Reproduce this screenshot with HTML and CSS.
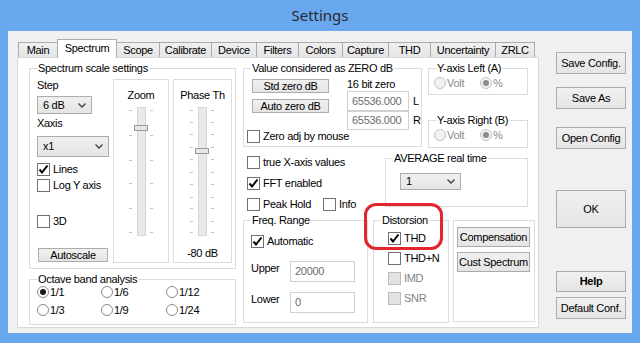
FILE: index.html
```html
<!DOCTYPE html>
<html lang="en">
<head>
    <meta charset="UTF-8">
    <title>Settings</title>
    <link rel="stylesheet" href="styles.css">
</head>
<body>
    <div class="window">
        <div class="titlebar">Settings</div>
        <div class="client">
            <div class="tabs-area">
                <div class="tabstrip">
                    <div class="tab" style="width:39px">Main</div>
                    <div class="tab active" style="width:60px">Spectrum</div>
                    <div class="tab" style="width:42px">Scope</div>
                    <div class="tab" style="width:52px">Calibrate</div>
                    <div class="tab" style="width:45px">Device</div>
                    <div class="tab" style="width:42px">Filters</div>
                    <div class="tab" style="width:44px">Colors</div>
                    <div class="tab" style="width:46px">Capture</div>
                    <div class="tab" style="width:42px">THD</div>
                    <div class="tab" style="width:65px">Uncertainty</div>
                    <div class="tab last" style="width:40px">ZRLC</div>
                </div>

                <div class="panel">
                    <div class="col-a">
                        <div class="group scale-group">
                            <div class="group-title">Spectrum scale settings</div>
                            <div class="scale-left">
                                <div class="label">Step</div>
                                <div class="combo step-combo">
                                    <span>6 dB</span>
                                    <svg width="8" height="5" viewBox="0 0 8 5"><path d="M0.5 0.5 L4 4 L7.5 0.5" fill="none" stroke="#444" stroke-width="1.4"/></svg>
                                </div>
                                <div class="label xaxis-label">Xaxis</div>
                                <div class="combo xaxis-combo">
                                    <span>x1</span>
                                    <svg width="8" height="5" viewBox="0 0 8 5"><path d="M0.5 0.5 L4 4 L7.5 0.5" fill="none" stroke="#444" stroke-width="1.4"/></svg>
                                </div>
                                <div class="check-row lines-row">
                                    <span class="checkbox"><svg width="11" height="11" viewBox="0 0 11 11"><path d="M1.5 5.5 L4 8.5 L9.5 1.5" fill="none" stroke="#000" stroke-width="2"/></svg></span>Lines
                                </div>
                                <div class="check-row logy-row"><span class="checkbox"></span>Log Y axis</div>
                                <div class="check-row d3-row"><span class="checkbox"></span>3D</div>
                                <div class="button autoscale">Autoscale</div>
                            </div>
                            <div class="slider-box zoom-box">
                                <div class="label">Zoom</div>
                                <svg class="slider" width="25" height="130" viewBox="0 0 25 130">
                                    <path d="M0 3.5h3M21 3.5h3M0 28.5h3M21 28.5h3M0 53.5h3M21 53.5h3M0 76.5h3M21 76.5h3M0 101.5h3M21 101.5h3M0 125.5h3M21 125.5h3" stroke="#c4c4c4"/>
                                    <rect x="8.5" y="0.5" width="8" height="128" fill="#e7eaea" stroke="#d6d6d6"/>
                                    <rect x="5.5" y="18.5" width="13" height="5" fill="#e6e6e6" stroke="#999"/>
                                </svg>
                            </div>
                            <div class="slider-box phase-box">
                                <div class="label">Phase Th</div>
                                <svg class="slider" width="25" height="130" viewBox="0 0 25 130">
                                    <path d="M0 3.5h3M21 3.5h3M0 15.5h3M21 15.5h3M0 27.5h3M21 27.5h3M0 40.5h3M21 40.5h3M0 52.5h3M21 52.5h3M0 65.5h3M21 65.5h3M0 77.5h3M21 77.5h3M0 90.5h3M21 90.5h3M0 101.5h3M21 101.5h3M0 114.5h3M21 114.5h3M0 125.5h3M21 125.5h3" stroke="#c4c4c4"/>
                                    <rect x="8.5" y="0.5" width="8" height="128" fill="#e7eaea" stroke="#d6d6d6"/>
                                    <rect x="5.5" y="41.5" width="13" height="5" fill="#e6e6e6" stroke="#999"/>
                                </svg>
                                <div class="label db-label">-80 dB</div>
                            </div>
                        </div>

                        <div class="group octave-group">
                            <div class="group-title">Octave band analysis</div>
                            <div class="octave-grid">
                                <div class="radio-row"><span class="radio on"></span>1/1</div>
                                <div class="radio-row"><span class="radio"></span>1/6</div>
                                <div class="radio-row"><span class="radio"></span>1/12</div>
                                <div class="radio-row"><span class="radio"></span>1/3</div>
                                <div class="radio-row"><span class="radio"></span>1/9</div>
                                <div class="radio-row"><span class="radio"></span>1/24</div>
                            </div>
                        </div>
                    </div>

                    <div class="col-b">
                        <div class="top-row">
                            <div class="group zero-group">
                                <div class="group-title">Value considered as ZERO dB</div>
                                <div class="zero-upper">
                                    <div class="zero-buttons">
                                        <div class="button small">Std zero dB</div>
                                        <div class="button small">Auto zero dB</div>
                                    </div>
                                    <div class="zero-values">
                                        <div class="label">16 bit zero</div>
                                        <div class="value-row"><div class="textbox">65536.000</div><span>L</span></div>
                                        <div class="value-row second"><div class="textbox">65536.000</div><span>R</span></div>
                                    </div>
                                </div>
                                <div class="check-row zero-adj"><span class="checkbox"></span>Zero adj by mouse</div>
                            </div>
                            <div class="y-stack">
                                <div class="group y-group">
                                    <div class="group-title">Y-axis Left (A)</div>
                                    <div class="y-radios">
                                        <div class="radio-row disabled volt"><span class="radio"></span>Volt</div>
                                        <div class="radio-row disabled"><span class="radio on"></span>%</div>
                                    </div>
                                </div>
                                <div class="group y-group right-axis">
                                    <div class="group-title">Y-axis Right (B)</div>
                                    <div class="y-radios">
                                        <div class="radio-row disabled volt"><span class="radio"></span>Volt</div>
                                        <div class="radio-row disabled"><span class="radio on"></span>%</div>
                                    </div>
                                </div>
                            </div>
                        </div>

                        <div class="mid-row">
                            <div class="checklist">
                                <div class="check-row"><span class="checkbox"></span>true X-axis values</div>
                                <div class="check-row">
                                    <span class="checkbox"><svg width="11" height="11" viewBox="0 0 11 11"><path d="M1.5 5.5 L4 8.5 L9.5 1.5" fill="none" stroke="#000" stroke-width="2"/></svg></span>FFT enabled
                                </div>
                                <div class="peak-row">
                                    <div class="check-row peak"><span class="checkbox"></span>Peak Hold</div>
                                    <div class="check-row"><span class="checkbox"></span>Info</div>
                                </div>
                            </div>
                            <div class="group avg-group">
                                <div class="group-title">AVERAGE real time</div>
                                <div class="combo avg-combo">
                                    <span>1</span>
                                    <svg width="8" height="5" viewBox="0 0 8 5"><path d="M0.5 0.5 L4 4 L7.5 0.5" fill="none" stroke="#444" stroke-width="1.4"/></svg>
                                </div>
                            </div>
                        </div>

                        <div class="bottom-row">
                            <div class="group freq-group">
                                <div class="group-title">Freq. Range</div>
                                <div class="check-row auto-row">
                                    <span class="checkbox"><svg width="11" height="11" viewBox="0 0 11 11"><path d="M1.5 5.5 L4 8.5 L9.5 1.5" fill="none" stroke="#000" stroke-width="2"/></svg></span>Automatic
                                </div>
                                <div class="field-row upper-row"><span class="label">Upper</span><div class="textbox wide">20000</div></div>
                                <div class="field-row lower-row"><span class="label">Lower</span><div class="textbox wide">0</div></div>
                            </div>
                            <div class="group dist-group">
                                <div class="group-title">Distorsion</div>
                                <div class="dist-list">
                                    <div class="check-row">
                                        <span class="checkbox"><svg width="11" height="11" viewBox="0 0 11 11"><path d="M1.5 5.5 L4 8.5 L9.5 1.5" fill="none" stroke="#000" stroke-width="2"/></svg></span>THD
                                    </div>
                                    <div class="check-row"><span class="checkbox"></span>THD+N</div>
                                    <div class="check-row disabled"><span class="checkbox"></span>IMD</div>
                                    <div class="check-row disabled"><span class="checkbox"></span>SNR</div>
                                </div>
                            </div>
                            <div class="group comp-group">
                                <div class="button comp-btn">Compensation</div>
                                <div class="button comp-btn second">Cust Spectrum</div>
                            </div>
                        </div>
                    </div>

                    <div class="annotation"></div>
                </div>
            </div>

            <div class="side-buttons">
                <div class="button side save-config">Save Config.</div>
                <div class="button side save-as">Save As</div>
                <div class="button side open-config">Open Config</div>
                <div class="button side ok">OK</div>
                <div class="button side help">Help</div>
                <div class="button side default-conf">Default Conf.</div>
            </div>
        </div>
    </div>
</body>
</html>
```

FILE: styles.css
```css
* {
    box-sizing: border-box;
    margin: 0;
    padding: 0;
}

body {
    width: 640px;
    height: 343px;
    overflow: hidden;
    background: #69a8ef;
    font-family: "Liberation Sans", Arial, sans-serif;
    font-size: 11px;
    letter-spacing: -0.3px;
    line-height: 13px;
    color: #000;
}

.window {
    width: 640px;
    height: 343px;
    background: #69a8ef;
}

.titlebar {
    height: 31px;
    line-height: 31px;
    text-align: center;
    font-family: "Noto Sans", "Open Sans", sans-serif;
    font-size: 15px;
    letter-spacing: 0;
    color: #2a2a2a;
}

.client {
    display: flex;
    margin: 0 8px;
    height: 302px;
    padding: 8px 0 0 9px;
    background: #f0f0f0;
}

/* tabs */

.tabs-area {
    width: 522px;
}

.tabstrip {
    display: flex;
    align-items: flex-end;
    height: 18px;
    padding-left: 1px;
}

.tab {
    height: 15px;
    line-height: 14px;
    text-align: center;
    border: 1px solid #acacac;
    border-right: none;
    border-bottom: none;
    background: linear-gradient(#f0f0f0, #e5e5e5);
    white-space: nowrap;
}

.tab.last {
    border-right: 1px solid #acacac;
}

.tab.active {
    position: relative;
    z-index: 1;
    height: 19px;
    margin-bottom: -1px;
    line-height: 16px;
    background: #fff;
    border-right: 1px solid #acacac;
}

.tab.active + .tab {
    border-left: none;
}

.panel {
    position: relative;
    display: flex;
    width: 522px;
    height: 271px;
    border: 1px solid #d9d9d9;
    background: #fff;
}

/* generic controls */

.group {
    position: relative;
    border: 1px solid #dcdcdc;
}

.group-title {
    position: absolute;
    top: -7px;
    left: 7px;
    padding: 0 1px;
    background: #fff;
    white-space: nowrap;
}

.label {
    height: 13px;
    white-space: nowrap;
}

.button {
    display: flex;
    align-items: center;
    justify-content: center;
    border: 1px solid #acacac;
    background: linear-gradient(#f0f0f0, #e5e5e5);
    white-space: nowrap;
}

.combo {
    display: flex;
    align-items: center;
    justify-content: space-between;
    padding: 0 5px 0 5px;
    border: 1px solid #acacac;
    background: linear-gradient(#f0f0f0, #e5e5e5);
}

.textbox {
    display: flex;
    align-items: center;
    width: 62px;
    height: 20px;
    padding-left: 4px;
    border: 1px solid #d0d0d0;
    background: #fff;
    color: #6d6d6d;
}

.check-row {
    display: flex;
    align-items: center;
    gap: 3px;
    height: 13px;
    white-space: nowrap;
}

.checkbox {
    display: flex;
    align-items: center;
    justify-content: center;
    flex: none;
    width: 13px;
    height: 13px;
    border: 1px solid #707070;
    background: #fff;
}

.check-row.disabled {
    color: #838383;
}

.check-row.disabled .checkbox {
    border-color: #bcbcbc;
    background: #e2e2e2;
}

.radio-row {
    display: flex;
    align-items: center;
    gap: 1px;
    height: 12px;
    white-space: nowrap;
}

.radio {
    display: flex;
    align-items: center;
    justify-content: center;
    flex: none;
    width: 12px;
    height: 12px;
    border: 1px solid #8a8a8a;
    border-radius: 50%;
    background: #fff;
}

.radio.on::after {
    content: "";
    width: 6px;
    height: 6px;
    border-radius: 50%;
    background: #1a1a1a;
}

.radio-row.disabled {
    color: #8a8a8a;
}

.radio-row.disabled .radio {
    border-color: #c4c4c4;
    background: #f2f2f2;
}

.radio-row.disabled .radio.on::after {
    background: #8c8c8c;
}

/* left column */

.col-a {
    width: 207px;
    margin: 10px 0 0 11px;
}

.scale-group {
    display: flex;
    height: 201px;
}

.scale-left {
    width: 76px;
    margin-left: 7px;
    padding-top: 10px;
}

.step-combo {
    width: 55px;
    height: 18px;
    margin-top: 4px;
}

.xaxis-label {
    margin-top: 3px;
}

.xaxis-combo {
    width: 72px;
    height: 21px;
    margin-top: 6px;
}

.lines-row {
    margin-top: 6px;
}

.logy-row {
    margin-top: 3px;
}

.d3-row {
    margin-top: 23px;
}

.autoscale {
    width: 70px;
    height: 14px;
    margin: 20px 0 0 1px;
}

.slider-box {
    display: flex;
    flex-direction: column;
    align-items: center;
    height: 184px;
    margin-top: 10px;
    padding-top: 9px;
    border: 1px solid #dcdcdc;
}

.zoom-box {
    width: 56px;
}

.phase-box {
    width: 59px;
    margin-left: 4px;
}

.slider {
    display: block;
    margin-top: 5px;
}

.db-label {
    margin-top: 10px;
}

.octave-group {
    height: 46px;
    margin-top: 10px;
}

.octave-grid {
    display: grid;
    grid-template-columns: 64px 65px 1fr;
    row-gap: 6px;
    padding: 6px 0 0 7px;
}

/* right column */

.col-b {
    width: 292px;
    margin: 10px 0 0 7px;
}

.top-row {
    display: flex;
    height: 80px;
}

.zero-group {
    width: 179px;
    height: 79px;
}

.zero-upper {
    display: flex;
    height: 61px;
}

.zero-buttons {
    display: flex;
    flex-direction: column;
    gap: 6px;
    width: 77px;
    margin-left: 8px;
    padding-top: 10px;
}

.button.small {
    height: 14px;
}

.zero-values {
    margin-left: 18px;
    padding-top: 9px;
}

.value-row {
    display: flex;
    align-items: center;
    gap: 4px;
}

.value-row.second .textbox {
    height: 19px;
}

.zero-adj {
    margin-left: 3px;
}

.y-stack {
    width: 100px;
    margin-left: 6px;
}

.y-group {
    height: 27px;
}

.y-group.right-axis {
    height: 28px;
    margin-top: 25px;
}

.y-radios {
    display: flex;
    padding: 8px 0 0 5px;
}

.volt {
    width: 46px;
}

.mid-row {
    display: flex;
    margin-top: 8px;
}

.checklist {
    display: flex;
    flex-direction: column;
    gap: 8px;
    width: 138px;
    margin-left: 4px;
}

.peak-row {
    display: flex;
}

.peak {
    width: 76px;
}

.avg-group {
    width: 143px;
    height: 49px;
    margin-top: 2px;
}

.avg-combo {
    width: 61px;
    height: 17px;
    margin: 14px 0 0 14px;
}

.bottom-row {
    display: flex;
    margin-top: 9px;
}

.freq-group {
    width: 125px;
    height: 103px;
    padding-left: 7px;
}

.auto-row {
    margin-top: 14px;
}

.field-row {
    display: flex;
    align-items: flex-start;
}

.field-row .label {
    width: 39px;
    margin-top: 1px;
}

.upper-row {
    margin-top: 13px;
}

.lower-row {
    margin-top: 10px;
}

.textbox.wide {
    width: 65px;
    height: 21px;
}

.dist-group {
    width: 76px;
    height: 103px;
    margin-left: 5px;
}

.dist-list {
    display: flex;
    flex-direction: column;
    gap: 7px;
    padding: 11px 0 0 14px;
}

.comp-group {
    width: 82px;
    height: 102px;
    margin-left: 4px;
    padding: 6px 0 0 3px;
}

.comp-btn {
    width: 73px;
    height: 20px;
}

.comp-btn.second {
    margin-top: 5px;
}

.annotation {
    position: absolute;
    left: 346px;
    top: 145px;
    width: 79px;
    height: 47px;
    border: 3px solid #e3262e;
    border-radius: 12px;
}

/* side buttons */

.side-buttons {
    width: 70px;
    margin-left: 17px;
    padding-top: 13px;
}

.button.side {
    width: 70px;
    height: 22px;
}

.save-as {
    margin-top: 13px;
}

.open-config {
    margin-top: 18px;
}

.button.ok {
    height: 38px;
    margin-top: 41px;
}

.button.help {
    height: 21px;
    margin-top: 43px;
    font-weight: bold;
}

.default-conf {
    margin-top: 5px;
}
```
